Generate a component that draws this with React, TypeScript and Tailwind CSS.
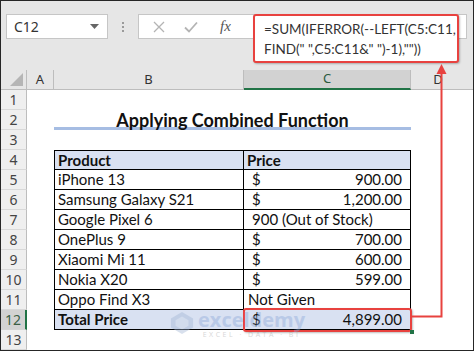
import React from 'react';

const ROWS: { n: number; b?: string; c?: React.ReactNode; kind?: 'head' | 'total' }[] = [
  { n: 1 },
  { n: 2 },
  { n: 3 },
  { n: 4, b: 'Product', c: 'Price', kind: 'head' },
  { n: 5, b: 'iPhone 13', c: ['$', '900.00'] },
  { n: 6, b: 'Samsung Galaxy S21', c: ['$', '1,200.00'] },
  { n: 7, b: 'Google Pixel 6', c: '900 (Out of Stock)' },
  { n: 8, b: 'OnePlus 9', c: ['$', '700.00'] },
  { n: 9, b: 'Xiaomi Mi 11', c: ['$', '600.00'] },
  { n: 10, b: 'Nokia X20', c: ['$', '599.00'] },
  { n: 11, b: 'Oppo Find X3', c: 'Not Given' },
  { n: 12, b: 'Total Price', c: ['$', '4,899.00'], kind: 'total' },
  { n: 13 },
];

const SHEET_FONT = { fontFamily: 'Lato, "Open Sans", sans-serif' };
const UI_FONT = { fontFamily: '"Noto Sans", "Open Sans", sans-serif' };

function PriceCell({ value }: { value: React.ReactNode }) {
  if (Array.isArray(value)) {
    return (
      <div className="flex h-full items-center justify-between pl-[8px] pr-[8px]">
        <span>{value[0]}</span>
        <span>{value[1]}</span>
      </div>
    );
  }
  return (
    <div className={'flex h-full items-center ' + (value === 'Not Given' ? 'pl-[4px]' : 'pl-[8px]')}>
      {value}
    </div>
  );
}

export default function App() {
  return (
    <div className="relative h-[351px] w-[474px] overflow-hidden border border-[#262626] bg-white text-[#111]">
      {/* formula bar area */}
      <div className="flex h-[69px] items-start bg-[#e6e6e6] pt-[13px]" style={UI_FONT}>
        <div className="ml-[5px] flex h-[25px] w-[102px] items-center justify-between border border-[#c6c6c6] bg-white pl-[7px] pr-[8px] text-[14px] text-[#333]">
          <span>C12</span>
          <svg width="9" height="5" viewBox="0 0 9 5"><path d="M0 0h9L4.5 5z" fill="#666" /></svg>
        </div>
        <div className="flex h-[25px] w-[30px] flex-col items-center justify-center gap-[2px]">
          <span className="h-[2px] w-[2px] bg-[#9a9a9a]" />
          <span className="h-[2px] w-[2px] bg-[#9a9a9a]" />
          <span className="h-[2px] w-[2px] bg-[#9a9a9a]" />
        </div>
        <div className="mr-[6px] flex h-[25px] flex-1 items-center border border-[#c6c6c6] bg-white">
          <svg className="ml-[14px]" width="12" height="12" viewBox="0 0 12 12"><path d="M1 1l10 10M11 1L1 11" stroke="#b4b4b4" strokeWidth="1.3" /></svg>
          <svg className="ml-[19px]" width="14" height="12" viewBox="0 0 14 12"><path d="M1 6.5l4 4L13 1.5" stroke="#b4b4b4" strokeWidth="1.8" fill="none" /></svg>
          <span className="ml-[22px] text-[15px] italic text-[#555]" style={{ fontFamily: '"Liberation Serif", serif' }}>fx</span>
        </div>
      </div>

      {/* sheet grid */}
      <div className="grid grid-cols-[26px_27px_190px_167px_1fr] grid-rows-[20px]" style={UI_FONT}>
        {/* column headers */}
        <div className="relative h-[20px] border-b border-r border-[#bdbdbd] bg-[#e6e6e6]">
          <svg className="absolute bottom-[3px] right-[3px]" width="13" height="13" viewBox="0 0 13 13"><path d="M13 0v13H0z" fill="#b5b5b5" /></svg>
        </div>
        <div className="flex h-[20px] items-center justify-center border-b border-r border-[#bdbdbd] bg-[#e6e6e6] text-[13px] text-[#333]">A</div>
        <div className="flex h-[20px] items-center justify-center border-b border-r border-[#bdbdbd] bg-[#e6e6e6] text-[13px] text-[#333]">B</div>
        <div className="flex h-[20px] items-center justify-center border-b-2 border-r border-b-[#217346] border-r-[#bdbdbd] bg-[#d2d2d2] text-[13px] text-[#2b5a3f]">C</div>
        <div className="flex h-[20px] items-center justify-center border-b border-[#bdbdbd] bg-[#e6e6e6] pr-[8px] text-[13px] text-[#333]">D</div>

        {ROWS.map((r) => {
          const isTable = r.b !== undefined;
          const isTotal = r.kind === 'total';
          const fill = r.kind ? 'bg-[#d9e1f2]' : 'bg-white';
          const topBorder = r.n === 4 ? 'border-t border-t-black' : '';
          return (
            <React.Fragment key={r.n}>
              <div
                className={
                  'flex h-[20px] items-center justify-center border-b text-[14px] ' +
                  (isTotal
                    ? 'border-b-[#d4d4d4] border-r-2 border-r-[#217346] bg-[#d2d2d2] text-[#3a5e45]'
                    : 'border-b-[#d9d9d9] border-r border-r-[#bdbdbd] bg-[#efefef] text-[#444]')
                }
              >
                {r.n}
              </div>
              <div className="h-[20px]" />
              {r.n === 2 ? (
                <div className="col-span-2 flex h-[20px] items-start justify-center border-b-[3px] border-[#a6bde3] text-[18px] font-bold leading-[20px]" style={SHEET_FONT}>
                  Applying Combined Function
                </div>
              ) : isTable ? (
                <>
                  <div
                    className={`flex h-[20px] items-center border-b border-l border-r border-black pl-[3px] text-[15px] ${fill} ${topBorder} ${r.kind ? 'font-bold' : ''}`}
                    style={SHEET_FONT}
                  >
                    {r.b}
                  </div>
                  <div
                    className={`h-[20px] border-b border-r border-black text-[15px] ${fill} ${topBorder} ${r.kind === 'head' ? 'flex items-center pl-[3px] font-bold' : ''}`}
                    style={SHEET_FONT}
                  >
                    {r.kind === 'head' ? r.c : <PriceCell value={r.c} />}
                  </div>
                </>
              ) : (
                <div className="col-span-2 h-[20px]" />
              )}
              <div className="h-[20px]" />
            </React.Fragment>
          );
        })}
      </div>

      {/* expanded formula with callout */}
      <div
        className="absolute left-[252px] top-[13px] flex h-[49px] w-[206px] flex-col justify-center whitespace-nowrap rounded-[3px] border-2 border-[#e8423f] bg-white pl-[9px] text-[13.5px] leading-[20px] text-[#333] shadow-[1px_1px_2px_rgba(0,0,0,0.25)]"
        style={SHEET_FONT}
      >
        <div>=SUM(IFERROR(--LEFT(C5:C11,</div>
        <div>FIND(" ",C5:C11&amp;" ")-1),""))</div>
      </div>

      {/* highlight around C12 */}
      <div className="absolute left-[242px] top-[307px] h-[24px] w-[169px] rounded-[3px] border-2 border-[#e8423f] shadow-[1px_1px_2px_rgba(0,0,0,0.25)]" />
      <div className="absolute left-[409px] top-[329px] h-[4px] w-[4px] bg-[#217346]" />

      {/* arrow */}
      <svg className="absolute left-0 top-0" width="474" height="351" viewBox="0 0 474 351">
        <path d="M410.5 315.5H440.5V72" stroke="#e8423f" strokeWidth="2" fill="none" />
        <path d="M440.5 63l-5 10h10z" fill="#e8423f" />
      </svg>

      {/* watermark */}
      <div className="pointer-events-none absolute left-[168px] top-[309px] flex items-start opacity-40">
        <svg width="26" height="24" viewBox="0 0 28 26" className="mt-[1px]">
          <path d="M14 1l12 7v10l-12 7L2 18V8z" fill="#9fb4d4" />
          <path d="M14 6l7 4v6l-7 4-7-4v-6z" fill="#c9d5e8" />
        </svg>
        <div className="ml-[3px] flex flex-col items-center">
          <span className="text-[20px] font-bold leading-[20px] text-[#8aa7d8]" style={{ fontFamily: '"Open Sans", sans-serif' }}>exceldemy</span>
          <span className="text-[7px] leading-[9px] tracking-[2.5px] text-[#999]" style={{ fontFamily: '"Open Sans", sans-serif' }}>EXCEL · DATA · BI</span>
        </div>
      </div>
    </div>
  );
}
